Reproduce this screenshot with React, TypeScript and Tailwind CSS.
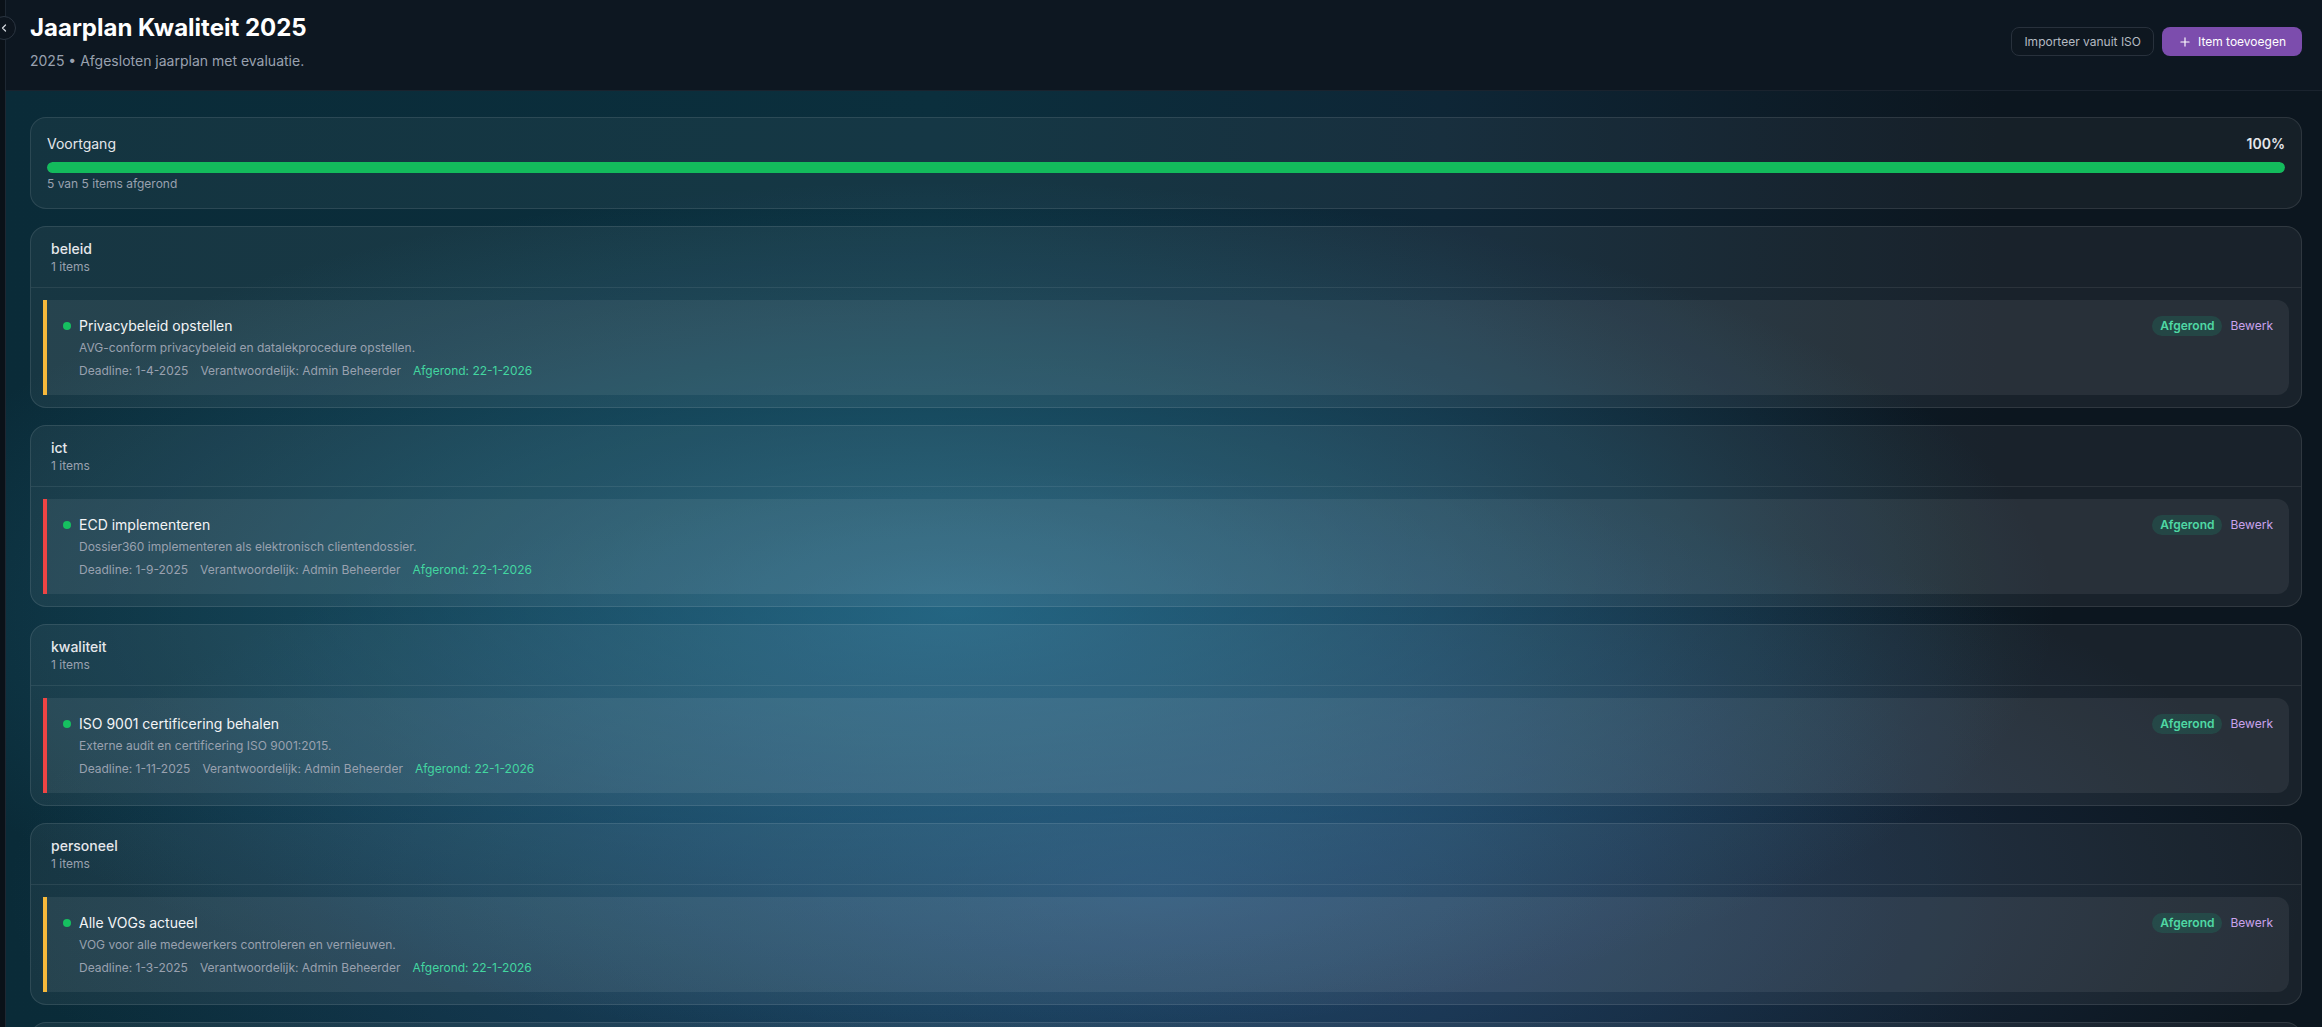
import { ChevronLeft, Plus } from "lucide-react";

type Item = {
  title: string;
  desc: string;
  deadline: string;
  accent: "yellow" | "red";
};

type Group = { name: string; items: Item[] };

const groups: Group[] = [
  {
    name: "beleid",
    items: [
      {
        title: "Privacybeleid opstellen",
        desc: "AVG-conform privacybeleid en datalekprocedure opstellen.",
        deadline: "1-4-2025",
        accent: "yellow",
      },
    ],
  },
  {
    name: "ict",
    items: [
      {
        title: "ECD implementeren",
        desc: "Dossier360 implementeren als elektronisch clientendossier.",
        deadline: "1-9-2025",
        accent: "red",
      },
    ],
  },
  {
    name: "kwaliteit",
    items: [
      {
        title: "ISO 9001 certificering behalen",
        desc: "Externe audit en certificering ISO 9001:2015.",
        deadline: "1-11-2025",
        accent: "red",
      },
    ],
  },
  {
    name: "personeel",
    items: [
      {
        title: "Alle VOGs actueel",
        desc: "VOG voor alle medewerkers controleren en vernieuwen.",
        deadline: "1-3-2025",
        accent: "yellow",
      },
    ],
  },
  {
    name: "zorg",
    items: [
      {
        title: "Zorgplannen evalueren",
        desc: "Alle zorgplannen halfjaarlijks evalueren met clienten.",
        deadline: "1-6-2025",
        accent: "yellow",
      },
    ],
  },
];

function ItemCard({ item }: { item: Item }) {
  return (
    <div
      className={`flex items-start justify-between rounded-r-xl border-l-4 bg-white/[0.065] p-4 ${
        item.accent === "yellow" ? "border-[#f6b93b]" : "border-[#ef4444]"
      }`}
    >
      <div className="flex items-start gap-2">
        <div className="mt-[6px] h-2 w-2 shrink-0 rounded-full bg-[#16c060]" />
        <div>
          <div className="text-sm leading-5 text-gray-100">{item.title}</div>
          <div className="mt-1 text-xs leading-4 text-gray-400">
            {item.desc}
          </div>
          <div className="mt-[7px] flex gap-3 text-xs leading-4 text-gray-400">
            <span>Deadline: {item.deadline}</span>
            <span>Verantwoordelijk: Admin Beheerder</span>
            <span className="text-[#43d6a0]">Afgerond: 22-1-2026</span>
          </div>
        </div>
      </div>
      <div className="flex items-center gap-2">
        <span className="rounded-full bg-[rgba(16,185,129,0.17)] px-2 py-0.5 text-xs font-semibold leading-4 text-[#4fd8a4]">
          Afgerond
        </span>
        <button className="text-xs leading-4 text-[#c9a3ec]">Bewerk</button>
      </div>
    </div>
  );
}

export default function App() {
  const done = 5;
  const total = 5;
  return (
    <div className="flex h-screen w-full overflow-hidden bg-[#0b131c] font-['Inter',sans-serif] text-gray-200">
      <aside className="relative w-[6px] shrink-0 border-r border-[#1e2833] bg-[#0a1118]">
        <button className="absolute -left-[8px] top-[16px] z-10 flex h-6 w-6 items-center justify-center rounded-full border border-[#2b3541] bg-[#0d151e] text-gray-300">
          <ChevronLeft className="h-3 w-3" strokeWidth={2.5} />
        </button>
      </aside>

      <main className="flex min-w-0 flex-1 flex-col">
        <header className="flex h-[91px] shrink-0 items-start justify-between border-b border-[#1a232e] bg-[#0d1721] pl-6 pr-5 pt-3">
          <div>
            <h1 className="text-2xl font-bold leading-8 text-white">
              Jaarplan Kwaliteit 2025
            </h1>
            <p className="mt-[7px] text-sm leading-5 text-gray-400">
              2025 • Afgesloten jaarplan met evaluatie.
            </p>
          </div>
          <div className="mt-[15px] flex items-center gap-2">
            <button className="h-[29px] rounded-lg border border-[#28313c] bg-[#0e1720] px-3 text-xs text-[#b4bac2]">
              Importeer vanuit ISO
            </button>
            <button className="flex h-[29px] items-center gap-1.5 rounded-lg bg-[#7c4dad] px-4 text-xs text-white">
              <Plus className="h-3.5 w-3.5" />
              Item toevoegen
            </button>
          </div>
        </header>

        <div className="min-h-0 flex-1 overflow-hidden bg-[#0c151e] bg-[radial-gradient(ellipse_1100px_430px_at_950px_520px,rgba(45,125,158,0.66),transparent),radial-gradient(ellipse_1150px_420px_at_1150px_800px,rgba(56,96,155,0.5),transparent),linear-gradient(90deg,#0a2b38_0%,#0b2f3d_40%,#0e2636_62%,#0c161f_86%)] pl-6 pr-5 pt-[26px]">
          <div className="flex flex-col gap-[17px]">
            <section className="rounded-2xl border border-white/10 bg-white/[0.045] p-4">
              <div className="flex items-center justify-between text-sm leading-5">
                <span className="text-gray-200">Voortgang</span>
                <span className="font-semibold text-gray-200">
                  {Math.round((done / total) * 100)}%
                </span>
              </div>
              <div className="mt-2 h-[11px] w-full overflow-hidden rounded-full bg-white/10">
                <div className="h-full w-full rounded-full bg-[#13bb5c]" />
              </div>
              <div className="mt-[3px] text-xs leading-4 text-gray-400">
                {done} van {total} items afgerond
              </div>
            </section>

            {groups.map((g) => (
              <section
                key={g.name}
                className="shrink-0 rounded-2xl border border-white/10 bg-white/[0.055]"
              >
                <div className="border-b border-white/[0.08] px-5 py-3">
                  <div className="text-sm font-medium leading-5 text-gray-200">
                    {g.name}
                  </div>
                  <div className="text-xs leading-4 text-gray-400">
                    {g.items.length} items
                  </div>
                </div>
                <div className="flex flex-col gap-3 p-3">
                  {g.items.map((it) => (
                    <ItemCard key={it.title} item={it} />
                  ))}
                </div>
              </section>
            ))}
          </div>
        </div>
      </main>
    </div>
  );
}
